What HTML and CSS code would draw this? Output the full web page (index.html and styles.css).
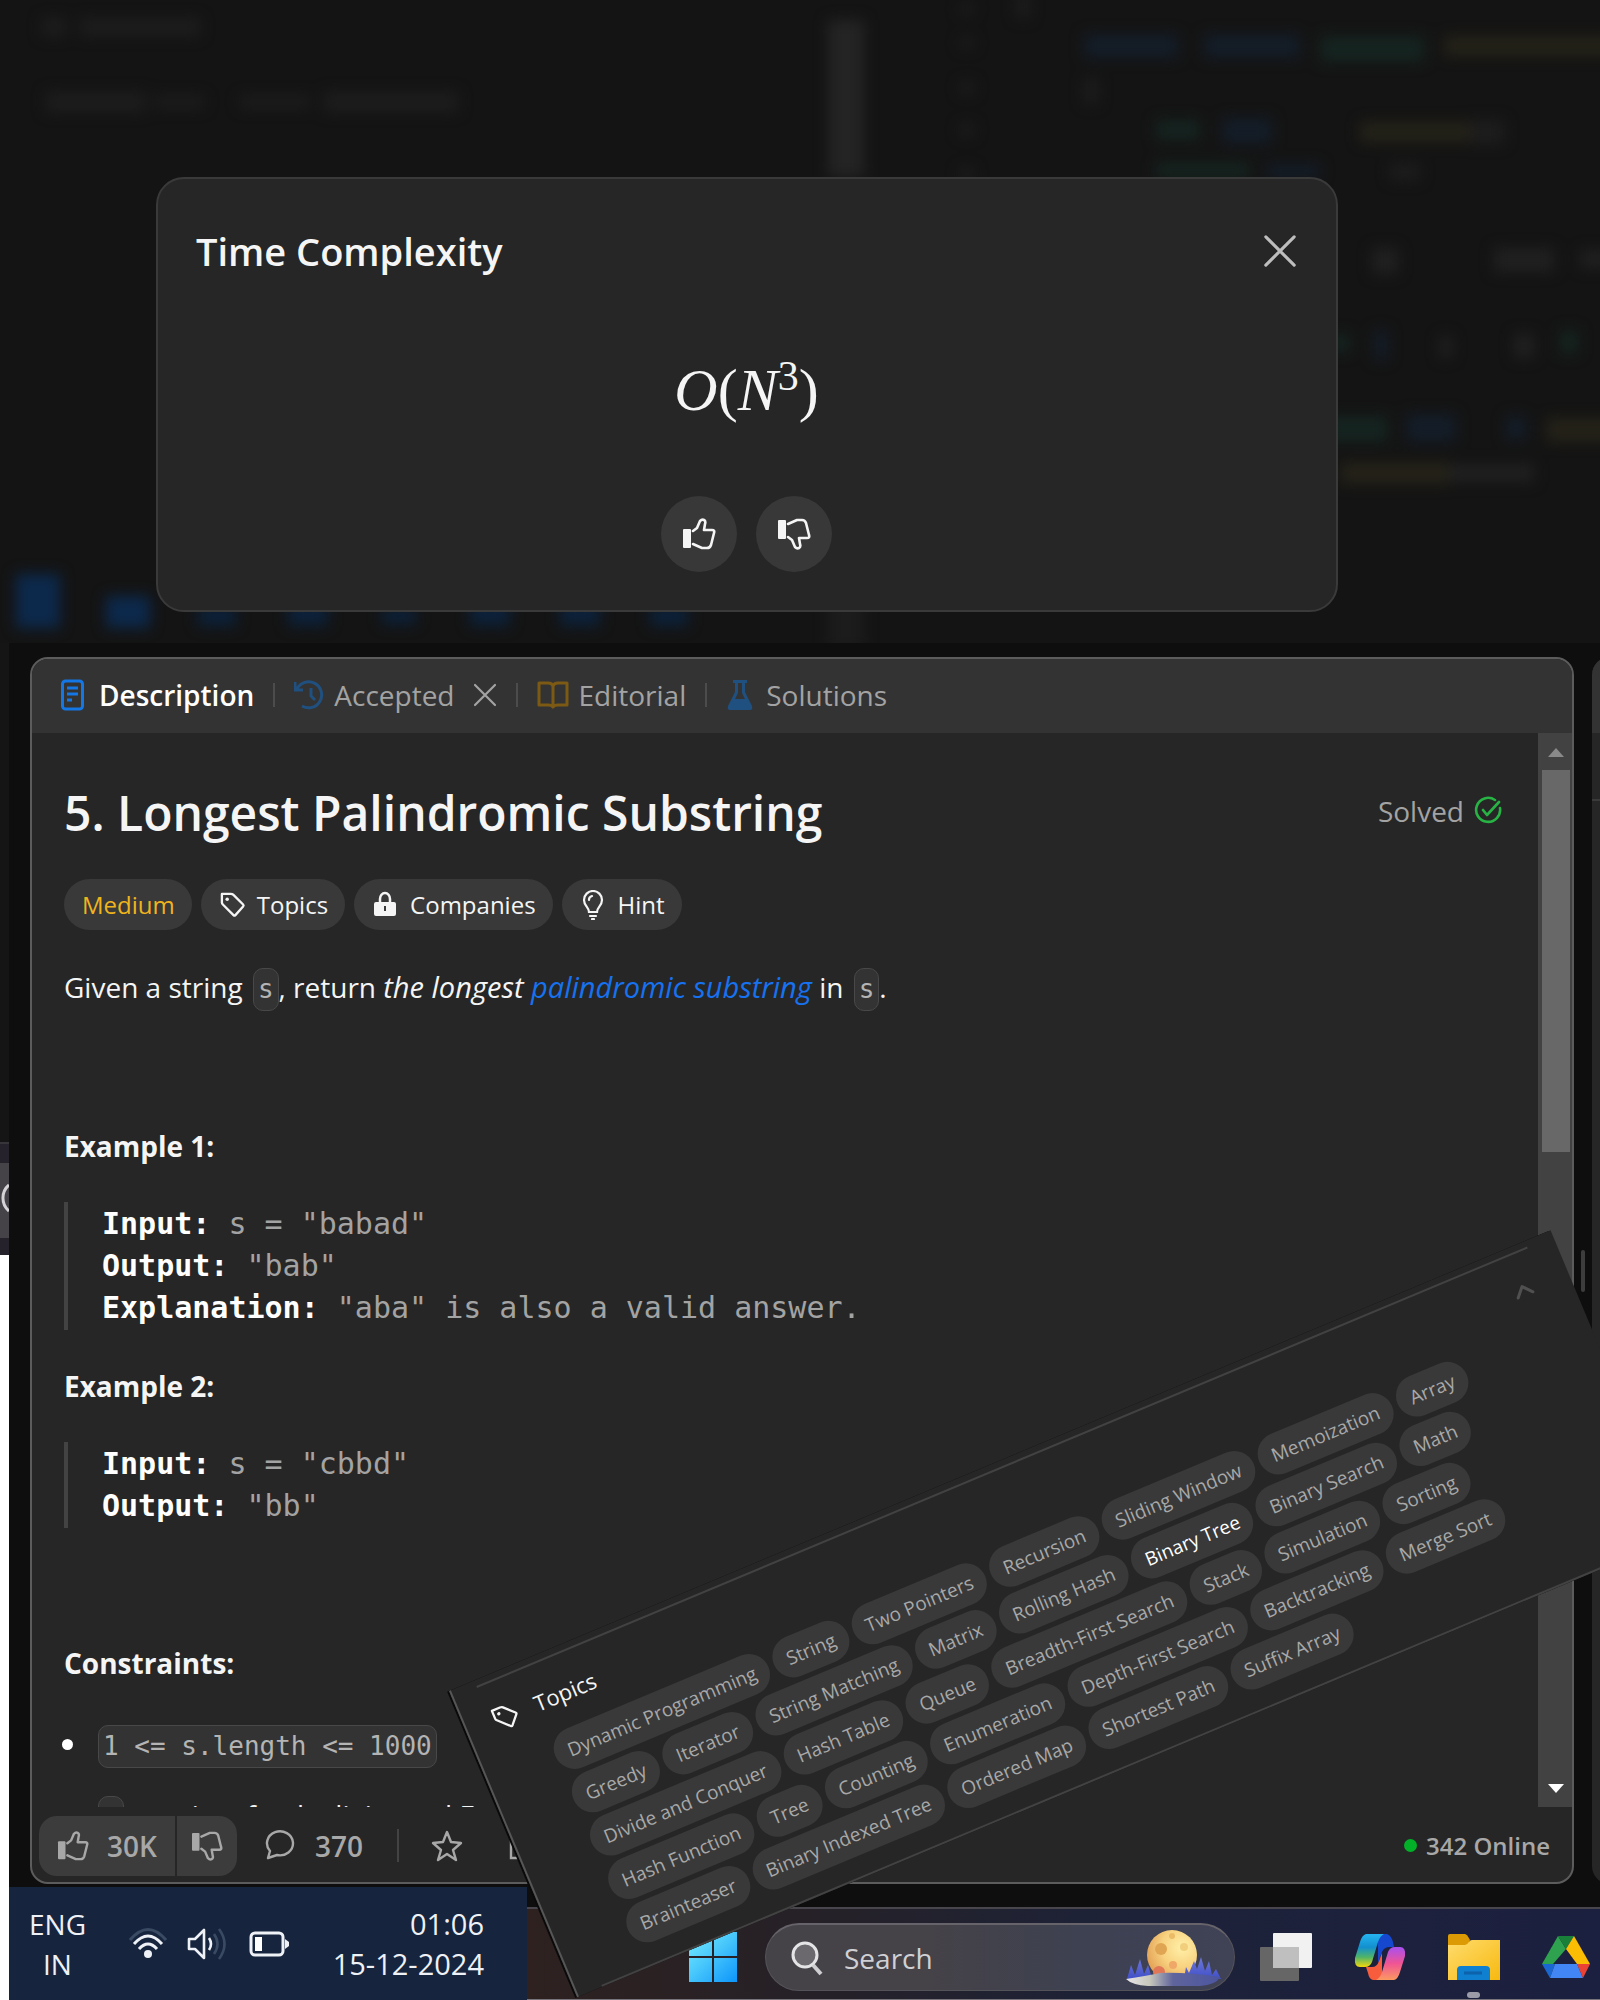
FILE: index.html
```html
<!DOCTYPE html>
<html lang="en">
<head>
<meta charset="utf-8">
<meta name="viewport" content="width=device-width, initial-scale=1">
<title>5. Longest Palindromic Substring</title>
<link rel="stylesheet" href="styles.css">
</head>
<body>
<svg class="defs" aria-hidden="true">
  <symbol id="thumb" viewBox="0 0 34 32">
    <rect x="1" y="11" width="8" height="19" rx="1" fill="currentColor"/>
    <path d="M11 13 L15 10 L18 3 Q20 1 22 2 Q24 3 23 6 L22 12 H30 Q33 12 32 15 L29 27 Q28 30 25 30 H20 L11 26" fill="none" stroke="currentColor" stroke-width="2.6" stroke-linejoin="round" stroke-linecap="round"/>
  </symbol>
  <symbol id="cross" viewBox="0 0 24 24">
    <path d="M2 2 L22 22 M22 2 L2 22" fill="none" stroke="currentColor" stroke-width="2.2" stroke-linecap="round"/>
  </symbol>
  <symbol id="tag" viewBox="0 0 28 28">
    <path d="M3 3 H12 Q14 3 15 4 L25 14 Q26 15 25 16 L17 25 Q16 26 15 25 L4 14 Q3 13 3 12 Z" fill="none" stroke="currentColor" stroke-width="2.4" stroke-linejoin="round"/>
    <circle cx="8.500" cy="8.500" r="1.800" fill="currentColor"/>
  </symbol>
</svg>

<main class="page">
  <section class="backdrop">
    <svg class="backdrop-art" viewBox="0 0 1600 643" preserveAspectRatio="xMinYMin slice" aria-hidden="true">
      <defs><filter id="soft" x="-10%" y="-10%" width="120%" height="120%" color-interpolation-filters="sRGB"><feGaussianBlur stdDeviation="7"/></filter></defs>
      <g filter="url(#soft)">
        <g fill="#1d1d1d">
          <rect x="42" y="18" width="24" height="18"/><rect x="80" y="18" width="120" height="18"/>
          <rect x="46" y="92" width="100" height="20"/><rect x="154" y="96" width="50" height="12"/>
          <rect x="240" y="96" width="70" height="12"/><rect x="324" y="92" width="134" height="20"/>
          <rect x="960" y="4" width="14" height="10"/><rect x="960" y="38" width="14" height="10"/><rect x="960" y="82" width="14" height="12"/>
          <rect x="960" y="124" width="14" height="12"/><rect x="960" y="168" width="14" height="12"/>
          <rect x="1016" y="-6" width="14" height="24"/><rect x="1084" y="78" width="14" height="26"/><rect x="1390" y="164" width="30" height="16"/>
          <rect x="1470" y="120" width="34" height="24"/>
        </g>
        <rect x="828" y="20" width="36" height="157" fill="#242424"/>
        <rect x="828" y="600" width="36" height="50" fill="#1c1c1c"/>
        <g fill="#141d28">
          <rect x="1084" y="34" width="94" height="24"/><rect x="1204" y="34" width="96" height="24"/>
          <rect x="1222" y="118" width="50" height="26"/><rect x="1266" y="164" width="54" height="14"/>
          <rect x="1374" y="330" width="14" height="30"/><rect x="1406" y="414" width="50" height="28"/><rect x="1506" y="416" width="20" height="24"/>
        </g>
        <g fill="#152420">
          <rect x="1320" y="36" width="104" height="26"/><rect x="1156" y="120" width="44" height="20"/><rect x="1156" y="162" width="94" height="16"/>
          <rect x="1310" y="416" width="78" height="26"/><rect x="1560" y="330" width="18" height="24"/><rect x="1330" y="334" width="20" height="18"/>
        </g>
        <g fill="#242218">
          <rect x="1444" y="36" width="170" height="20"/><rect x="1360" y="122" width="110" height="20"/>
          <rect x="1546" y="418" width="70" height="24"/><rect x="1340" y="462" width="110" height="22"/>
        </g>
        <g fill="#202021">
          <rect x="1372" y="248" width="26" height="26"/><rect x="1494" y="248" width="60" height="24"/><rect x="1580" y="250" width="30" height="18"/>
          <rect x="1440" y="336" width="12" height="22"/><rect x="1514" y="334" width="20" height="24"/><rect x="1450" y="464" width="84" height="18"/>
        </g>
        <g fill="#0c294c">
          <rect x="16" y="574" width="44" height="54"/><rect x="106" y="596" width="44" height="32"/>
        </g>
        <g fill="#0c213a">
          <rect x="198" y="606" width="38" height="20"/><rect x="288" y="600" width="40" height="26"/><rect x="382" y="608" width="34" height="16"/>
          <rect x="470" y="600" width="40" height="26"/><rect x="560" y="600" width="40" height="26"/><rect x="650" y="606" width="38" height="20"/>
        </g>
      </g>
    </svg>
    <div class="dialog" role="dialog" aria-labelledby="dialog-title">
      <header class="dialog-head">
        <h2 id="dialog-title">Time Complexity</h2>
        <button type="button" class="close" aria-label="Close"><svg width="34" height="34"><use href="#cross"/></svg></button>
      </header>
      <p class="formula"><i>O</i>(<i>N</i><sup>3</sup>)</p>
      <div class="votes">
        <button type="button" class="round" aria-label="Helpful"><svg width="34" height="32"><use href="#thumb"/></svg></button>
        <button type="button" class="round" aria-label="Not helpful"><svg class="flip" width="34" height="32"><use href="#thumb"/></svg></button>
      </div>
    </div>
  </section>

  <section class="desktop">
    <div class="edge" aria-hidden="true">
      <div class="edge-dark"></div>
      <div class="edge-bar">
        <div class="edge-pill"><svg width="9" height="75" viewBox="0 0 9 75"><path d="M9 22 A17 17 0 0 0 9 48" fill="none" stroke="#d5d3d6" stroke-width="3"/></svg></div>
      </div>
    </div>
    <div class="screen">
      <div class="panes">
        <article class="problem">
          <nav class="tabs" aria-label="Problem">
            <a class="tab active" href="#description">
              <svg width="28" height="32" viewBox="0 0 28 32"><rect x="1.500" y="2" width="20" height="28" rx="3" fill="none" stroke="#1477e6" stroke-width="3"/><path d="M6 9 H17 M6 15 H17 M6 21 H11" stroke="#1477e6" stroke-width="3"/></svg>
              Description</a>
            <a class="tab" href="#accepted">
              <svg width="30" height="32" viewBox="1 0 30 32" fill="none" stroke="#20507f" stroke-width="3"><path d="M4 10 A13 13 0 1 1 9 27 M2 3 V11 H10 M18 9 V17 L22 21"/></svg>
              Accepted
              <svg class="tab-close" width="24" height="24"><use href="#cross"/></svg></a>
            <a class="tab" href="#editorial">
              <svg width="32" height="28" viewBox="1 0 32 28" fill="none" stroke="#7d5a14" stroke-width="3" stroke-linejoin="round"><path d="M17 5 Q16 2 12 2 H3 V24 H12 Q16 24 17 26 Q18 24 22 24 H31 V2 H22 Q18 2 17 5 V25"/></svg>
              Editorial</a>
            <a class="tab" href="#solutions">
              <svg width="30" height="32" viewBox="0 0 30 32" fill="#20507f"><path d="M7 1 H21 V4 H19 V13 L26 27 Q27 31 24 31 H4 Q1 31 2 27 L9 13 V4 H7 Z M12 4 V14 L9 20 H19 L16 14 V4 Z" fill-rule="evenodd"/></svg>
              Solutions</a>
          </nav>
          <div class="scroll">
            <div class="content">
              <div class="title-row">
                <h1>5. Longest Palindromic Substring</h1>
                <p class="solved">Solved
                  <svg width="30" height="30" viewBox="0 0 30 30" fill="none" stroke="#28b445" stroke-width="2.600" stroke-linecap="round" stroke-linejoin="round"><path d="M22 4 A12 12 0 1 0 27 12 M10 14 L14 19 L26 6"/></svg></p>
              </div>
              <div class="pills">
                <span class="pill medium">Medium</span>
                <button type="button" class="pill"><svg width="27" height="27"><use href="#tag"/></svg>Topics</button>
                <button type="button" class="pill"><svg width="27" height="27" viewBox="0 0 27 27"><path d="M8 11 V8 A5 6 0 0 1 18 8 V11" fill="none" stroke="#f5f5f5" stroke-width="2.500"/><path fill="#f5f5f5" fill-rule="evenodd" d="M4 11 H22 Q24 11 24 13 V23 Q24 25 22 25 H4 Q2 25 2 23 V13 Q2 11 4 11 Z M12 15 V20 H14 V15 Z"/></svg>Companies</button>
                <button type="button" class="pill"><svg width="27" height="30" viewBox="0 0 27 30" fill="none" stroke="#f5f5f5" stroke-width="2.200" stroke-linecap="round"><path d="M9 22 C9 17 4 16 4 10 A9 9 0 0 1 22 10 C22 16 17 17 17 22 Z M10 26 H16 M9 10 A4 4 0 0 1 12 6 M12 29 H14"/></svg>Hint</button>
              </div>
              <p class="statement">Given a string <code>s</code>, return <em>the longest <a href="#palindromic">palindromic substring</a></em> in <code>s</code>.</p>
              <p class="label spaced">Example 1:</p>
<pre><b>Input:</b> s = "babad"
<b>Output:</b> "bab"
<b>Explanation:</b> "aba" is also a valid answer.</pre>
              <p class="label">Example 2:</p>
<pre><b>Input:</b> s = "cbbd"
<b>Output:</b> "bb"</pre>
              <p class="label spaced">Constraints:</p>
              <ul class="limits">
                <li><code>1 &lt;= s.length &lt;= 1000</code></li>
                <li><code>s</code> consist of only digits and English letters.</li>
              </ul>
            </div>
            <div class="scrollbar" aria-hidden="true">
              <span class="arrow-up"></span><span class="thumb"></span><span class="arrow-down"></span>
            </div>
          </div>
          <footer class="actions">
            <div class="vote-group">
              <button type="button" class="like"><svg width="32" height="30"><use href="#thumb"/></svg>30K</button>
              <button type="button" class="dislike" aria-label="Dislike"><svg class="flip" width="32" height="30"><use href="#thumb"/></svg></button>
            </div>
            <button type="button" class="plain comments"><svg width="31" height="31" viewBox="0 0 31 31" fill="none" stroke="currentColor" stroke-width="2.400" stroke-linejoin="round"><path d="M3 28 L5 21 A13 12 0 1 1 12 25 Z"/></svg>370</button>
            <span class="rule"></span>
            <button type="button" class="plain" aria-label="Favourite"><svg width="32" height="32" viewBox="0 0 32 32" fill="none" stroke="currentColor" stroke-width="2.400" stroke-linejoin="round"><path d="M16 2 L20 12 L30 13 L22 20 L25 30 L16 24 L7 30 L10 20 L2 13 L12 12 Z"/></svg></button>
            <button type="button" class="plain share" aria-label="Share"><svg width="32" height="32" viewBox="0 0 32 32" fill="none" stroke="currentColor" stroke-width="2.400"><path d="M12 9 H2 V28 H28 V20"/></svg></button>
            <p class="online"><span class="dot"></span>342 Online</p>
          </footer>
        </article>
        <div class="gutter" aria-hidden="true"><span></span></div>
        <div class="peek" aria-hidden="true"><div class="peek-card"><div class="peek-head"></div><div class="peek-tools"></div></div></div>
      </div>

      <div class="bars">
        <div class="tray">
          <p class="lang">ENG<br>IN</p>
          <div class="tray-icons">
            <svg width="38" height="34" viewBox="0 0 38 34" fill="none" stroke-width="3"><path d="M1 13 Q19 -8 37 13" stroke="#3a4a63"/><path d="M5 17 Q19 1 33 17 M10 22 Q19 12 28 22" stroke="#eef1f6"/><circle cx="19" cy="27" r="4" fill="#eef1f6"/></svg>
            <svg width="42" height="34" viewBox="0 0 42 34" fill="none" stroke-width="2.600" stroke-linejoin="round"><path d="M2 12 H8 L17 3 V31 L8 22 H2 Z M22 11 Q26 17 22 23" stroke="#eef1f6"/><path d="M27 7 Q34 17 27 27 M32 2 Q43 17 32 32" stroke="#3a4a63"/></svg>
            <svg width="41" height="28" viewBox="0 0 41 28"><rect x="2" y="3" width="32" height="22" rx="4" fill="none" stroke="#eef1f6" stroke-width="3"/><rect x="6" y="7" width="7" height="14" fill="#fff"/><path d="M36 9 L40 12 V16 L36 19 Z" fill="#eef1f6"/></svg>
          </div>
          <p class="clock"><time>01:06</time><br><time>15-12-2024</time></p>
        </div>
        <div class="taskbar">
          <button type="button" class="task" aria-label="Start"><svg width="50" height="52" viewBox="0 0 50 52"><defs><linearGradient id="win" x1="0" y1="0" x2="50" y2="52" gradientUnits="userSpaceOnUse"><stop offset="0" stop-color="#7cf0ff"/><stop offset=".5" stop-color="#45c5fb"/><stop offset="1" stop-color="#0a93fb"/></linearGradient></defs><path fill="url(#win)" d="M1 1 H24 V25 H1 Z M26 1 H49 V25 H26 Z M1 27 H24 V51 H1 Z M26 27 H49 V51 H26 Z"/></svg></button>
          <label class="search">
            <svg width="34" height="36" viewBox="0 0 34 36"><circle cx="15" cy="15" r="12" fill="#6b696e" stroke="#e4e4e6" stroke-width="3"/><path d="M23 25 L31 34" stroke="#cfcfd2" stroke-width="4"/></svg>
            <input type="text" placeholder="Search" aria-label="Search">
            <svg width="96" height="58" viewBox="0 0 96 58"><defs>
              <radialGradient id="moon" cx=".7" cy=".35" r=".8"><stop offset="0" stop-color="#fff0a8"/><stop offset=".5" stop-color="#f8d280"/><stop offset="1" stop-color="#e09a50"/></radialGradient>
              <linearGradient id="ground"><stop offset="0" stop-color="#e8e6ea"/><stop offset=".25" stop-color="#c8c8bc"/><stop offset=".5" stop-color="#5f649c"/><stop offset="1" stop-color="#4c55a0"/></linearGradient>
              <linearGradient id="trees" x1="0" y1="0" x2="0" y2="1"><stop offset="0" stop-color="#7079d8"/><stop offset="1" stop-color="#3f4fc8"/></linearGradient></defs>
              <circle cx="46" cy="26" r="25" fill="url(#moon)"/><circle cx="35" cy="20" r="6" fill="#e0a552"/><circle cx="46" cy="7" r="3" fill="#ebbb68"/><circle cx="58" cy="18" r="4" fill="#f2cf7d"/><circle cx="47" cy="36" r="4" fill="#f0a868"/><circle cx="33" cy="43" r="6" fill="#e07858"/>
              <path fill="url(#trees)" d="M1 50 L5 36 L9 46 L14 30 L18 45 L22 36 L25 46 L28 50 Z M58 50 L60 38 L63 44 L68 32 L71 40 L75 28 L79 42 L83 32 L86 46 L90 40 L95 50 Z"/>
              <path fill="url(#ground)" d="M0 50 Q20 47 34 44 Q60 43 94 48 Q90 56 74 57 H22 Q6 56 0 50 Z"/></svg>
          </label>
          <button type="button" class="task" aria-label="Task view"><svg width="52" height="48" viewBox="0 0 52 48"><rect x="0" y="14" width="39" height="34" rx="1" fill="#666"/><rect x="13" y="0" width="39" height="35" rx="1" fill="#f1f1f2"/><path d="M13 14 H39 V35 H13 Z" fill="#bfbfc0"/></svg></button>
          <button type="button" class="task" aria-label="Copilot"><svg width="52" height="48" viewBox="0 0 52 48"><defs>
              <linearGradient id="co1" x1="0" y1="0" x2="0" y2="1"><stop offset="0" stop-color="#25b4f0"/><stop offset=".4" stop-color="#1290d0"/><stop offset=".7" stop-color="#4fb468"/><stop offset="1" stop-color="#f4d70c"/></linearGradient>
              <linearGradient id="co2" x1="0" y1="0" x2="0" y2="1"><stop offset="0" stop-color="#a850f0"/><stop offset=".5" stop-color="#f05494"/><stop offset="1" stop-color="#fb9a60"/></linearGradient></defs>
              <path d="M24 1 H33 Q37 2 39 9 L40 14 H36 Q30 14 28 19 L24 30 Z" fill="#1647cf"/>
              <path d="M28 47 H19 Q15 46 14 40 L12 34 H18 Q23 34 25 28 L28 20 Z" fill="#f75c3c"/>
              <path d="M12 1 H30 Q26 3 24 9 L18 29 Q16 34 11 34 H6 Q0 34 1 25 L6 9 Q8 2 12 1 Z" fill="url(#co1)"/>
              <path d="M40 47 H22 Q26 45 28 39 L34 19 Q36 14 41 14 H46 Q52 14 51 23 L46 39 Q44 46 40 47 Z" fill="url(#co2)"/></svg></button>
          <button type="button" class="task running" aria-label="File Explorer"><svg width="52" height="48" viewBox="0 0 52 48"><defs><linearGradient id="fold" x1="0" y1="0" x2="1" y2="1"><stop offset="0" stop-color="#ffdc6e"/><stop offset="1" stop-color="#f7b90f"/></linearGradient></defs><path d="M0 3 Q0 1 2 1 H17 Q19 1 22 7 L20 14 H0 Z" fill="#dc9b04"/><path d="M0 12 H17 Q19 12 21 9 Q22 7 24 7 H52 V47 H0 Z" fill="url(#fold)"/><path d="M9 47 V37 Q9 33 13 33 H38 Q42 33 42 37 V47 Z" fill="#0f7fd0"/><path d="M16 40 H34" stroke="#0c62ab" stroke-width="3"/></svg></button>
          <button type="button" class="task" aria-label="Drive"><svg width="48" height="44" viewBox="0 0 48 44"><path fill="#2fa24f" d="M16 1 L24 14 L11 29 H0 Z"/><path fill="#188038" d="M16 1 H32 L24 14 Z"/><path fill="#fbbc04" d="M32 1 L48 29 H35 L24 14 Z"/><path fill="#1a67d2" d="M0 29 H13 L8 43 Z"/><path fill="#4285f4" d="M13 29 H35 L41 43 H8 Z"/><path fill="#ea4335" d="M35 29 H48 L41 43 Z"/></svg></button>
        </div>
      </div>
    </div>

    <section class="topics" aria-labelledby="topics-title">
      <header class="topics-head">
        <svg width="27" height="27"><use href="#tag"/></svg>
        <h2 id="topics-title">Topics</h2>
        <button type="button" aria-label="Collapse"><svg width="20" height="14" viewBox="0 0 20 14"><path d="M2 12 L10 3 L18 12" fill="none" stroke="#505050" stroke-width="3" stroke-linecap="round" stroke-linejoin="round"/></svg></button>
      </header>
      <div class="chips">
        <div><a href="#t">Dynamic Programming</a><a href="#t">String</a><a href="#t">Two Pointers</a><a href="#t">Recursion</a><a href="#t">Sliding Window</a><a href="#t">Memoization</a><a href="#t">Array</a></div>
        <div><a href="#t">Greedy</a><a href="#t">Iterator</a><a href="#t">String Matching</a><a href="#t">Matrix</a><a href="#t">Rolling Hash</a><a class="on" href="#t">Binary Tree</a><a href="#t">Binary Search</a><a href="#t">Math</a></div>
        <div><a href="#t">Divide and Conquer</a><a href="#t">Hash Table</a><a href="#t">Queue</a><a href="#t">Breadth-First Search</a><a href="#t">Stack</a><a href="#t">Simulation</a><a href="#t">Sorting</a></div>
        <div><a href="#t">Hash Function</a><a href="#t">Tree</a><a href="#t">Counting</a><a href="#t">Enumeration</a><a href="#t">Depth-First Search</a><a href="#t">Backtracking</a><a href="#t">Merge Sort</a></div>
        <div><a href="#t">Brainteaser</a><a href="#t">Binary Indexed Tree</a><a href="#t">Ordered Map</a><a href="#t">Shortest Path</a><a href="#t">Suffix Array</a></div>
      </div>
    </section>
  </section>
</main>
</body>
</html>
```
FILE: styles.css
```css
* { box-sizing: border-box; }
body { margin: 0; background: #0e0e0e; color: #f5f5f5; font-family: "Open Sans", "Noto Sans", sans-serif; font-size: 28px; line-height: 40px; }
h1, h2, p, ul, pre { margin: 0; padding: 0; }
button { border: 0; padding: 0; margin: 0; background: none; color: inherit; font: inherit; }
a { color: inherit; text-decoration: none; }
svg { display: block; flex: none; }
.defs { position: absolute; width: 0; height: 0; }
.flip { transform: scaleY(-1); }
.page { overflow: hidden; }

/* dimmed page with the dialog */
.backdrop { position: relative; background: #141414; padding: 177px 262px 31px 156px; }
.backdrop-art { position: absolute; inset: 0; width: 100%; height: 100%; }
.dialog { position: relative; background: #262626; border: 2px solid #3a3a3a; border-radius: 28px; padding: 48px 39px 38px 38px; }
.dialog-head { display: flex; justify-content: space-between; align-items: center; }
.dialog-head h2 { font-size: 38px; line-height: 48px; font-weight: 600; }
.close { color: #bdbdbd; }
.formula { margin: 83px 0 74px; text-align: center; font: 60px/64px "Liberation Serif", serif; }
.formula sup { font-size: 42px; line-height: 0; vertical-align: 20px; }
.votes { display: flex; justify-content: center; gap: 19px; }
.round { width: 76px; height: 76px; border-radius: 50%; background: #383838; display: flex; align-items: center; justify-content: center; }

/* desktop */
.desktop { position: relative; display: flex; background: #0e0e0e; }
.edge { flex: none; width: 9px; background: #fff; }
.edge-dark { height: 499px; background: #151515; }
.edge-bar { height: 113px; background: #25222b; padding-top: 19px; border-top: 2px solid #37343a; }
.edge-pill { height: 75px; background: #454248; }
.screen { flex: 1; min-width: 0; padding-top: 14px; }
.panes { display: flex; padding-left: 21px; }
.problem { flex: 1; min-width: 0; background: #262626; border: 2px solid #5c5c5c; border-radius: 18px; overflow: hidden; }
.gutter { flex: none; width: 18px; display: flex; justify-content: center; padding-top: 593px; }
.gutter span { width: 4px; height: 42px; border-radius: 2px; background: #3d3d3d; }
.peek { flex: none; width: 8px; overflow: hidden; display: flex; }
.peek-card { flex: none; width: 60px; background: #262626; border-radius: 18px; overflow: hidden; }
.peek-head { height: 76px; background: #333; }
.peek-tools { height: 68px; border-bottom: 2px solid #3a3a3a; }

.tabs { display: flex; align-items: center; height: 74px; background: #333; padding: 0 0 2px 10px; }
.tab { display: flex; align-items: center; gap: 10px; padding: 0 19px; color: #a3a3a3; }
.tab + .tab { border-left: 2px solid #4c4c4c; height: 24px; }
.tab.active { color: #fff; font-weight: 600; }
.tab-close { margin-left: 8px; }

.scroll { display: flex; height: 1074px; overflow: hidden; }
.content { flex: 1; min-width: 0; padding: 48px 35px 0 32px; }
.title-row { display: flex; justify-content: space-between; }
h1 { font-size: 48px; line-height: 64px; font-weight: 600; }
.solved { display: flex; align-items: center; gap: 9px; height: 40px; margin-top: 10px; color: #a3a3a3; }
.pills { display: flex; gap: 9px; margin-top: 34px; }
.pill { display: flex; align-items: center; gap: 11px; height: 51px; padding: 0 17px 0 18px; border-radius: 26px; background: #393939; font-size: 24px; }
.medium { color: #f0b41c; }
.statement { margin-top: 35px; line-height: 44px; }
.statement em { font-size: 29px; }
.statement a { color: #1672f0; }
code { display: inline-block; margin-left: 3px; padding: 0 4px; border: 1px solid #484848; border-radius: 10px; background: #333; color: #b4b4b4; font: 26px/41px "DejaVu Sans Mono", monospace; }
.label { margin-top: 36px; font-weight: 700; }
.spaced { margin-top: 115px; }
pre { margin-top: 36px; padding: 1px 0 1px 34px; border-left: 4px solid #434343; color: #a3a3a3; font: 30px/42px "DejaVu Sans Mono", monospace; }
pre b { color: #fff; }
.limits { margin-top: 40px; padding-left: 34px; list-style: none; line-height: 43px; }
.limits li { position: relative; margin-bottom: 26px; white-space: nowrap; }
.limits li::before { content: ""; position: absolute; left: -36px; top: 16px; width: 11px; height: 11px; border-radius: 50%; background: #fff; }
.limits code { margin-left: 0; }

.scrollbar { flex: none; width: 34px; display: flex; flex-direction: column; align-items: center; padding-left: 2px; background: #424242; }
.arrow-up, .arrow-down { border: 8px solid transparent; }
.arrow-up { margin: 15px 0 13px; border-top: 0; border-bottom: 9px solid #8a8a8a; }
.thumb { width: 28px; height: 382px; background: #686868; }
.arrow-down { margin: auto 0 14px; border-bottom: 0; border-top: 9px solid #fff; }

.actions { display: flex; align-items: center; height: 75px; padding: 2px 22px 0 7px; color: #a8a8a8; font-weight: 600; }
.vote-group { display: flex; gap: 2px; }
.like, .dislike { display: flex; align-items: center; height: 60px; background: #3c3c3c; }
.like { gap: 18px; padding: 0 18px; border-radius: 18px 0 0 18px; }
.dislike { padding: 0 14px; border-radius: 0 18px 18px 0; }
.plain { display: flex; align-items: center; gap: 19px; }
.comments { margin-left: 28px; }
.rule { width: 2px; height: 33px; margin: 0 32px 0 34px; background: #434343; }
.share { margin-left: 46px; }
.online { display: flex; align-items: center; gap: 9px; margin-left: auto; font-size: 24px; }
.dot { width: 13px; height: 13px; border-radius: 50%; background: #02b128; }

/* task bars */
.bars { display: flex; align-items: flex-end; margin-top: 3px; }
.tray { flex: none; width: 518px; height: 113px; display: flex; align-items: center; justify-content: space-between; padding: 0 43px 0 20px; background: #16243e; color: #eef1f6; }
.lang { text-align: center; }
.tray-icons { display: flex; align-items: center; gap: 20px; }
.clock { text-align: right; font-size: 29px; }
.taskbar { flex: 1; min-width: 0; height: 93px; display: flex; align-items: center; gap: 42px; padding: 6px 8px 0 161px; border-top: 2px solid #48464c; border-bottom: 1px solid #77747c; background: linear-gradient(90deg, #2e2120, #252128 28%, #1d2238 55%, #1c2040); }
.task { flex: none; position: relative; }
.search { flex: 0 1 470px; min-width: 0; height: 68px; display: flex; align-items: center; gap: 20px; margin: 0 -17px 0 -15px; padding: 0 12px 0 24px; border: 1px solid #55535a; border-top: 2px solid #66636a; border-radius: 34px; background: linear-gradient(90deg, #464348, #454248 35%, #3d4152 70%, #404255); }
.search input { flex: 1; min-width: 0; border: 0; padding: 0; background: none; color: #d0d0d4; font: inherit; }
.search input::placeholder { color: #d0d0d4; opacity: 1; }
.running::after { content: ""; position: absolute; left: 19px; bottom: -17px; width: 13px; height: 6px; border-radius: 3px; background: #9c9ca8; }

/* tilted topics sheet lying over the problem */
.topics { position: absolute; left: 449px; top: 1048px; width: 1194px; height: 332px; padding-top: 30px; transform: rotate(-22.7deg); transform-origin: 0 0; background: #262626; border-left: 2px solid #565656; box-shadow: -2px 0 0 #0a0a0a; }
.topics::before, .topics::after { content: ""; position: absolute; left: 25px; right: 28px; height: 2px; background: #424242; }
.topics::before { top: 6px; }
.topics::after { bottom: 0; right: 0; }
.topics-head { display: flex; align-items: center; height: 30px; padding: 0 38px 0 27px; }
.topics-head h2 { flex: 1; margin-left: 18px; font-size: 22px; line-height: 30px; font-weight: 400; }
.chips { display: flex; flex-direction: column; gap: 5px; margin-top: 20px; padding-left: 71px; }
.chips div { display: flex; gap: 6px; }
.chips a { height: 42px; padding: 0 14px; border-radius: 21px; background: #393939; color: #a8a8a8; font-size: 19px; line-height: 42px; white-space: nowrap; }
.chips .on { color: #fff; }
```
